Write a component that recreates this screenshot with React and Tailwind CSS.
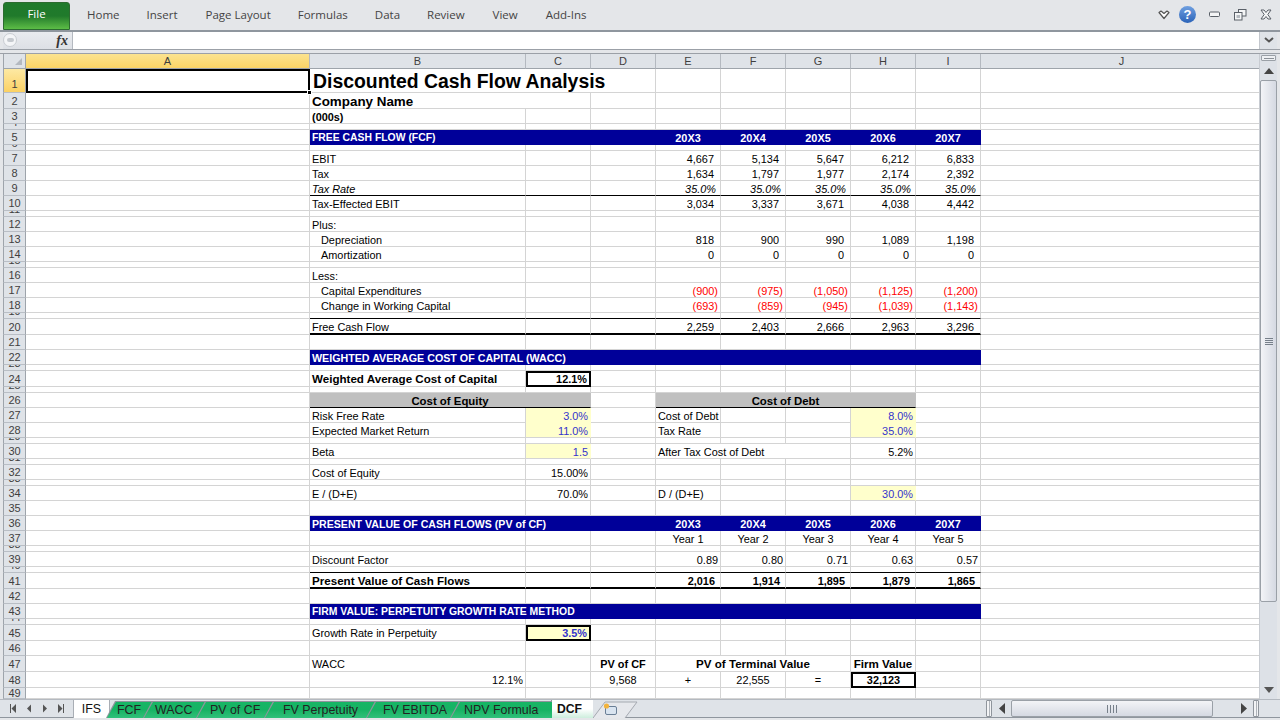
import React from 'react';
import { twMerge } from 'tailwind-merge';

const R6 = 'justify-end pr-[6px]';
const R5 = 'justify-end pr-[5px]';
const R4 = 'justify-end pr-[4px]';
const R2 = 'justify-end pr-[2px]';
const CT = 'justify-center';
const L = 'pl-[2px]';
const IND = 'pl-[11px]';
const MID = 'items-center';
const NAVY = 'bg-[#000099] border-r-[#000099] border-b-[#000099]';
const BH = 'font-bold text-white text-[10.4px] leading-[13px]';
const BOLD = 'font-bold text-[11.6px]';
const RED = 'text-[#ff0000] justify-end pr-[2px]';
const INP = 'bg-[#ffffcc] border-r-[#ffffcc] text-[#3333cc] justify-end pr-[2px]';
const INPM = 'bg-[#ffffcc] border-r-[#ffffcc] border-b-[#ffffcc] text-[#3333cc] justify-end pr-[2px]';
const BOX = 'border-2 border-black font-bold justify-end pr-[2px] items-center';
const GREY = 'bg-[#c0c0c0] border-r-[#c0c0c0] border-b-black font-bold text-[11.4px] justify-center';

const vals = (arr, cls) => arr.map((t, i) => [4 + i, t, cls]);
const years = vals(['20X3', '20X4', '20X5', '20X6', '20X7'], `${BH} text-[10.9px] ${CT}`);

const H15 = 'h-[15px]';
const H16 = 'h-[16px]';
const H6 = 'h-[6px]';

const rows = [
  { n: 1, h: 'h-[24px]', cells: [[0, '', 'border-2 border-black'], [1, 'Discounted Cash Flow Analysis', 'pl-[3px] col-span-3 font-bold text-[19.4px] leading-[20px] items-center']] },
  { n: 2, h: H16, cells: [[1, 'Company Name', `${L} col-span-2 font-bold text-[13.4px]`]] },
  { n: 3, h: H15, cells: [[1, '(000s)', `${L} font-bold`]] },
  { n: 4, h: H6, cells: [] },
  { n: 5, h: H15, fill: NAVY, cells: [[1, 'FREE CASH FLOW (FCF)', `${L} ${BH}`], ...years] },
  { n: 6, h: H6, cells: [] },
  { n: 7, h: H15, cells: [[1, 'EBIT', L], ...vals(['4,667', '5,134', '5,647', '6,212', '6,833'], R6)] },
  { n: 8, h: H15, cells: [[1, 'Tax', L], ...vals(['1,634', '1,797', '1,977', '2,174', '2,392'], R6)] },
  { n: 9, h: H15, fill: 'border-b-black', cells: [[1, 'Tax Rate', `${L} italic`], ...vals(['35.0%', '35.0%', '35.0%', '35.0%', '35.0%'], `${R4} italic`)] },
  { n: 10, h: H15, cells: [[1, 'Tax-Effected EBIT', L], ...vals(['3,034', '3,337', '3,671', '4,038', '4,442'], R6)] },
  { n: 11, h: H6, cells: [] },
  { n: 12, h: H15, cells: [[1, 'Plus:', L]] },
  { n: 13, h: H15, cells: [[1, 'Depreciation', IND], ...vals(['818', '900', '990', '1,089', '1,198'], R6)] },
  { n: 14, h: H15, cells: [[1, 'Amortization', IND], ...vals(['0', '0', '0', '0', '0'], R6)] },
  { n: 15, h: H6, cells: [] },
  { n: 16, h: H15, cells: [[1, 'Less:', L]] },
  { n: 17, h: H15, cells: [[1, 'Capital Expenditures', IND], ...vals(['(900)', '(975)', '(1,050)', '(1,125)', '(1,200)'], RED)] },
  { n: 18, h: H15, cells: [[1, 'Change in Working Capital', IND], ...vals(['(693)', '(859)', '(945)', '(1,039)', '(1,143)'], RED)] },
  { n: 19, h: H6, fill: 'border-b-black', cells: [] },
  { n: 20, h: H16, fill: 'border-b-2 border-b-black', cells: [[1, 'Free Cash Flow', L], ...vals(['2,259', '2,403', '2,666', '2,963', '3,296'], R6)] },
  { n: 21, h: H15, cells: [] },
  { n: 22, h: H15, fill: NAVY, cells: [[1, 'WEIGHTED AVERAGE COST OF CAPITAL (WACC)', `${L} ${BH} text-[10.7px] col-span-3`]] },
  { n: 23, h: H6, cells: [] },
  { n: 24, h: H16, cells: [[1, 'Weighted Average Cost of Capital', `${L} ${BOLD} ${MID}`], [2, '12.1%', BOX]] },
  { n: 25, h: H6, cells: [] },
  { n: 26, h: H15, cells: [[1, 'Cost of Equity', `${GREY} col-span-2`], [4, 'Cost of Debt', `${GREY} col-span-4`]] },
  { n: 27, h: H15, cells: [[1, 'Risk Free Rate', L], [2, '3.0%', INPM], [4, 'Cost of Debt', L], [7, '8.0%', INPM]] },
  { n: 28, h: H15, cells: [[1, 'Expected Market Return', L], [2, '11.0%', INP], [4, 'Tax Rate', L], [7, '35.0%', INP]] },
  { n: 29, h: H6, cells: [] },
  { n: 30, h: H15, cells: [[1, 'Beta', L], [2, '1.5', INP], [4, 'After Tax Cost of Debt', `${L} col-span-3`], [7, '5.2%', R2]] },
  { n: 31, h: H6, cells: [] },
  { n: 32, h: H15, cells: [[1, 'Cost of Equity', L], [2, '15.00%', R2]] },
  { n: 33, h: H6, cells: [] },
  { n: 34, h: H15, cells: [[1, 'E / (D+E)', L], [2, '70.0%', R2], [4, 'D / (D+E)', L], [7, '30.0%', INP]] },
  { n: 35, h: H15, cells: [] },
  { n: 36, h: H15, fill: NAVY, cells: [[1, 'PRESENT VALUE OF CASH FLOWS (PV of CF)', `${L} ${BH} text-[10.6px] col-span-2`], ...years] },
  { n: 37, h: H15, cells: vals(['Year 1', 'Year 2', 'Year 3', 'Year 4', 'Year 5'], CT) },
  { n: 38, h: H6, cells: [] },
  { n: 39, h: H15, cells: [[1, 'Discount Factor', L], ...vals(['0.89', '0.80', '0.71', '0.63', '0.57'], R2)] },
  { n: 40, h: H6, fill: 'border-b-black', cells: [] },
  { n: 41, h: H16, fill: 'border-b-2 border-b-black', cells: [[1, 'Present Value of Cash Flows', `${L} ${BOLD}`], ...vals(['2,016', '1,914', '1,895', '1,879', '1,865'], `${R5} font-bold`)] },
  { n: 42, h: H15, cells: [] },
  { n: 43, h: H15, fill: NAVY, cells: [[1, 'FIRM VALUE: PERPETUITY GROWTH RATE METHOD', `${L} ${BH} col-span-3`]] },
  { n: 44, h: H6, cells: [] },
  { n: 45, h: H16, cells: [[1, 'Growth Rate in Perpetuity', `${L} ${MID}`], [2, '3.5%', 'border-2 border-black bg-[#ffffcc] font-bold text-[#3333cc] justify-end pr-[2px] items-center']] },
  { n: 46, h: H15, cells: [] },
  { n: 47, h: H16, cells: [[1, 'WACC', `${L} ${MID}`], [3, 'PV of CF', `${CT} ${MID} font-bold`], [4, 'PV of Terminal Value', `${CT} ${MID} ${BOLD} col-span-3`], [7, 'Firm Value', `${CT} ${MID} ${BOLD}`]] },
  { n: 48, h: H16, cells: [[1, '12.1%', `${R2} ${MID}`], [3, '9,568', `${CT} ${MID}`], [4, '+', `${CT} ${MID}`], [5, '22,555', `${CT} ${MID}`], [6, '=', `${CT} ${MID}`], [7, '32,123', 'border-2 border-black font-bold justify-center items-center']] },
  { n: 49, h: 'h-[11px]', cells: [] },
];

const SPAN = { 'col-span-2': 2, 'col-span-3': 3, 'col-span-4': 4 };
const GRID = 'grid grid-cols-[284px_216px_65px_65px_65px_65px_65px_65px_65px_282px] grid-rows-1 h-full';
const COLS = ['A', 'B', 'C', 'D', 'E', 'F', 'G', 'H', 'I', 'J'];

function Row({ r }) {
  const small = r.h === H6 || r.h === 'h-[11px]';
  const out = [];
  let c = 0;
  while (c < 10) {
    const cell = r.cells.find((x) => x[0] === c);
    const cls = cell ? cell[2] : '';
    const key = cls.split(' ').find((k) => SPAN[k]);
    const span = key ? SPAN[key] : 1;
    const inFill = r.fill && c >= 1 && c <= 8 ? r.fill : '';
    out.push(
      <div key={c} className={twMerge('flex items-end whitespace-nowrap min-w-0 min-h-0 border-r border-b border-r-[#d4d4d4] border-b-[#d4d4d4]', inFill, cls)}>
        {cell ? cell[1] : ''}
      </div>
    );
    c += span;
  }
  return (
    <div className={`flex ${r.h}`}>
      <div className={`w-[23px] shrink-0 flex justify-center overflow-hidden border-b border-r border-l border-b-[#b9bec5] border-r-[#9ea4ab] border-l-[#9ea4ab] text-[11px] leading-[12px] text-[#3f3f3f] ${r.n === 1 ? 'bg-gradient-to-b from-[#fde9a3] to-[#fbd162] items-end pb-[2px]' : 'bg-[#dfe3e8]'} ${small ? 'items-start' : r.n === 1 ? '' : 'items-center'}`}>
        <span className={r.h === H6 ? '-mt-[8px]' : small ? '-mt-[1px]' : ''}>{r.n}</span>
      </div>
      <div className={`${GRID} relative`}>
        {out}
        {r.n === 1 && <div className="absolute left-[281px] top-[21px] w-[5px] h-[5px] bg-black border border-white z-10" />}
      </div>
    </div>
  );
}

function ColHead() {
  return (
    <div className="flex h-[15px] text-[11px] leading-[12px] text-[#3f3f3f]">
      <div className="w-[23px] shrink-0 bg-[#dfe3e8] border-r border-b border-l border-l-[#9ea4ab] border-r-[#9ea4ab] border-b-[#9ea4ab] flex items-end justify-end pr-[2px] pb-[2px]">
        <svg width="9" height="9" viewBox="0 0 9 9"><path d="M8 1V8H1Z" fill="#b4b9c0" /></svg>
      </div>
      <div className={GRID}>
        {COLS.map((c, i) => (
          <div key={c} className={`flex items-center justify-center border-r border-b border-r-[#b4b9c0] border-b-[#9ea4ab] ${i === 0 ? 'bg-gradient-to-b from-[#fbe38f] to-[#fbd465]' : 'bg-[#dfe3e8]'}`}>{c}</div>
        ))}
      </div>
    </div>
  );
}

function TopBar() {
  const tabs = [['Home', 'ml-[17px]'], ['Insert', 'ml-[27px]'], ['Page Layout', 'ml-[28px]'], ['Formulas', 'ml-[27px]'], ['Data', 'ml-[27px]'], ['Review', 'ml-[27px]'], ['View', 'ml-[28px]'], ['Add-Ins', 'ml-[28px]']];
  return (
    <div className="h-[30px] flex items-stretch shrink-0 border-b-2 border-[#8f969e] box-content">
      <div className="ml-[3px] mt-[2px] w-[67px] h-[28px] rounded-t-[3px] border border-[#2c6b30] bg-gradient-to-b from-[#1f7a2c] via-[#207a2b] to-[#5cbd46] flex items-center justify-center font-['Open_Sans'] text-white text-[11.5px] pb-[4px]">File</div>
      {tabs.map(([t, m]) => (
        <div key={t} className={`${m} flex items-center font-['Open_Sans'] text-[11.5px] text-[#444] pb-[1px]`}>{t}</div>
      ))}
      <div className="ml-auto flex items-center pr-[8px] gap-[11px] pb-[1px]">
        <svg width="12" height="10" viewBox="0 0 12 10"><path d="M1 2.5L3 1L6 3.5L9 1L11 2.5L6 8.5Z" fill="#fff" stroke="#555" strokeWidth="1.2" strokeLinejoin="round" /></svg>
        <div className="w-[17px] h-[17px] rounded-full bg-gradient-to-b from-[#6f9fe0] to-[#2a63b8] flex items-center justify-center text-white text-[13px] font-bold leading-none -ml-[2px]">?</div>
        <svg width="12" height="7" viewBox="0 0 12 7" className="ml-[2px]"><rect x="0.5" y="1" width="10" height="4.5" rx="1" fill="#f4f5f6" stroke="#5a6068" /></svg>
        <svg width="13" height="12" viewBox="0 0 13 12" className="ml-[2px]"><rect x="4.5" y="0.5" width="7.5" height="6.5" fill="#f4f5f6" stroke="#5a6068" /><rect x="0.5" y="3.5" width="7.5" height="7.5" fill="#f4f5f6" stroke="#5a6068" /><rect x="2.5" y="6" width="3.5" height="3" fill="#b5bac0" /></svg>
        <svg width="12" height="11" viewBox="0 0 12 11" className="ml-[2px]"><path d="M1 1H4L6 3.5L8 1H11L7.8 5.5L11 10H8L6 7.5L4 10H1L4.2 5.5Z" fill="#f4f5f6" stroke="#5a6068" strokeLinejoin="round" /></svg>
      </div>
    </div>
  );
}

function FormulaBar() {
  return (
    <div className="shrink-0">
      <div className="h-[17px] flex pl-[3px] pr-[3px] border-b border-[#9ba0a7] box-content">
        <div className="w-[70px] bg-gradient-to-b from-[#e9ebef] to-[#dde0e5] border-r border-[#b4b9c0] flex items-center relative">
          <div className="absolute left-[0px] top-[1px] w-[14px] h-[14px] rounded-full bg-[#f4f5f7] border border-[#c9cdd2]" />
          <div className="absolute left-[4px] top-[6px] w-[7px] h-[4px] rounded-[2px] bg-[#c5c9ce]" />
          <span className="ml-auto mr-[4px] font-['Liberation_Serif'] italic font-bold text-[14px] leading-[14px] text-[#333]">fx</span>
        </div>
        <div className="flex-1 bg-white" />
        <div className="w-[18px] bg-[#dfe3e8] border-l border-[#c3c7cd] flex items-center justify-center">
          <svg width="10" height="7" viewBox="0 0 10 7"><path d="M1 1L5 4.5L9 1" fill="none" stroke="#555" strokeWidth="2" /></svg>
        </div>
      </div>
      <div className="h-[3px]" />
      <div className="h-[1px] bg-[#9ba0a7]" />
    </div>
  );
}

function VScroll() {
  return (
    <div className="w-[18px] shrink-0 flex flex-col bg-[#dde1e7] border-l border-[#c8ccd2]">
      <div className="h-[6px] mt-[1px] mx-[1px] bg-[#eef0f3] border border-[#9aa0a7] rounded-[1px] flex items-center justify-center">
        <div className="w-[10px] h-[1px] bg-[#8a9097]" />
      </div>
      <div className="h-[19px] flex items-center justify-center">
        <svg width="10" height="6" viewBox="0 0 10 6"><path d="M5 0L10 6H0Z" fill="#444" /></svg>
      </div>
      <div className="h-[522px] rounded-[2px] border border-[#9aa0a7] bg-gradient-to-r from-[#f3f4f7] to-[#d5d9e2] flex items-center justify-center">
        <div className="w-[8px] h-[7px] flex flex-col justify-between">
          <div className="h-[1px] bg-[#77808a]" /><div className="h-[1px] bg-[#77808a]" /><div className="h-[1px] bg-[#77808a]" /><div className="h-[1px] bg-[#77808a]" />
        </div>
      </div>
      <div className="flex-1" />
      <div className="h-[19px] flex items-center justify-center">
        <svg width="10" height="6" viewBox="0 0 10 6"><path d="M5 6L10 0H0Z" fill="#555" /></svg>
      </div>
    </div>
  );
}

function Nav({ d }) {
  return <svg width="8" height="9" viewBox="0 0 8 9"><path d={d} fill="#555" /></svg>;
}

function Tab({ t, w, m, text }) {
  return (
    <div className={`${w} ${m} h-[17px] mt-[1px] relative bg-[#8e949c] [clip-path:polygon(9px_0,100%_0,100%_100%,0_100%)]`}>
      <div className={`absolute inset-0 left-[1px] top-[1px] flex items-center bg-gradient-to-b from-[#17b565] via-[#16b364] to-[#2fc07a] [clip-path:polygon(9px_0,100%_0,100%_100%,0_100%)] text-[12.4px] leading-[14px] text-[#222] ${text}`}>{t}</div>
    </div>
  );
}

function TabBar() {
  return (
    <div className="h-[18px] flex items-stretch shrink-0 bg-[#dfe3e8] border-t border-[#b4b9c0] pl-[3px] box-border relative">
      <div className="w-[70px] flex items-center justify-start pl-[6px] gap-[8px]">
        <Nav d="M1 0H2V9H1ZM7 0V9L2.5 4.5Z" />
        <Nav d="M6 0.5V8.5L2 4.5Z" />
        <Nav d="M2 0.5V8.5L6 4.5Z" />
        <Nav d="M1 0V9L5.5 4.5ZM6 0H7V9H6Z" />
      </div>
      <div className="w-[37px] h-[18px] bg-white border-r border-l border-[#a9aeb5] flex items-center justify-center text-[12.4px] leading-[14px] text-[#111]">IFS</div>
      <div className="flex -ml-[4px]">
        <Tab t="FCF" w="w-[48px]" m="" text="pl-[10px]" />
        <Tab t="WACC" w="w-[64px]" m="-ml-[11px]" text="pl-[11px]" />
        <Tab t="PV of CF" w="w-[79px]" m="-ml-[11px]" text="pl-[13px]" />
        <Tab t="FV Perpetuity" w="w-[113px]" m="-ml-[11px]" text="pl-[18px]" />
        <Tab t="FV EBITDA" w="w-[95px]" m="-ml-[11px]" text="pl-[16px]" />
        <Tab t="NPV Formula" w="w-[102px]" m="-ml-[11px]" text="pl-[13px]" />
      </div>
      <div className="w-[42px] h-[18px] -ml-[1px] pr-[6px] bg-gradient-to-b from-white via-white to-[#cdeedd] border-l border-[#8e949c] flex items-center justify-center text-[12.2px] leading-[14px] font-bold text-[#111]">DCF</div>
      <div className="w-[46px] h-[17px] mt-[1px] relative">
        <svg width="46" height="17" viewBox="0 0 46 17" className="absolute inset-0">
          <path d="M0 17L12 1H44L32 17" fill="#e6e8ec" stroke="#a4a9b0" />
          <rect x="12.5" y="5.5" width="11" height="8" rx="1.5" fill="#d9e4f0" stroke="#6a7f96" />
          <circle cx="13.5" cy="5" r="2.6" fill="#f2b33d" />
        </svg>
      </div>
      <div className="absolute left-[986px] top-0 w-[6px] h-[17px] bg-[#f2f3f5] border border-[#8f959c] rounded-[1px] flex justify-center"><div className="w-[1px] h-full bg-[#aeb3b9]" /></div>
      <svg width="8" height="11" viewBox="0 0 8 11" className="absolute left-[998px] top-[3px]"><path d="M7 0V11L1 5.5Z" fill="#444" /></svg>
      <div className="absolute left-[1011px] top-0 w-[202px] h-[17px] rounded-[2px] border border-[#9aa0a7] bg-gradient-to-b from-[#f3f4f7] to-[#d5d9e2] flex items-center justify-center gap-[1px]">
        <div className="w-[1px] h-[8px] bg-[#77808a]" /><div className="w-[1px] h-[8px] ml-[1px] bg-[#77808a]" /><div className="w-[1px] h-[8px] ml-[1px] bg-[#77808a]" /><div className="w-[1px] h-[8px] ml-[1px] bg-[#77808a]" />
      </div>
      <svg width="8" height="11" viewBox="0 0 8 11" className="absolute left-[1240px] top-[3px]"><path d="M1 0V11L7 5.5Z" fill="#444" /></svg>
      <div className="absolute left-[1253px] top-0 w-[6px] h-[17px] bg-[#f2f3f5] border border-[#8f959c] rounded-[1px] flex justify-center"><div className="w-[1px] h-full bg-[#aeb3b9]" /></div>
    </div>
  );
}

export default function App() {
  return (
    <div className="w-[1280px] h-[720px] overflow-hidden flex flex-col bg-[#e4e6e9] font-['Liberation_Sans',Arial,sans-serif] text-[10.9px] leading-[12px] text-black">
      <TopBar />
      <FormulaBar />
      <div className="h-[645px] flex shrink-0 pl-[3px] pr-[3px] overflow-hidden">
        <div className="flex-1 min-w-0 bg-white overflow-hidden">
          <ColHead />
          {rows.map((r) => <Row key={r.n} r={r} />)}
        </div>
        <VScroll />
      </div>
      <TabBar />
      <div className="h-[1px] bg-[#8f969e]" />
    </div>
  );
}
